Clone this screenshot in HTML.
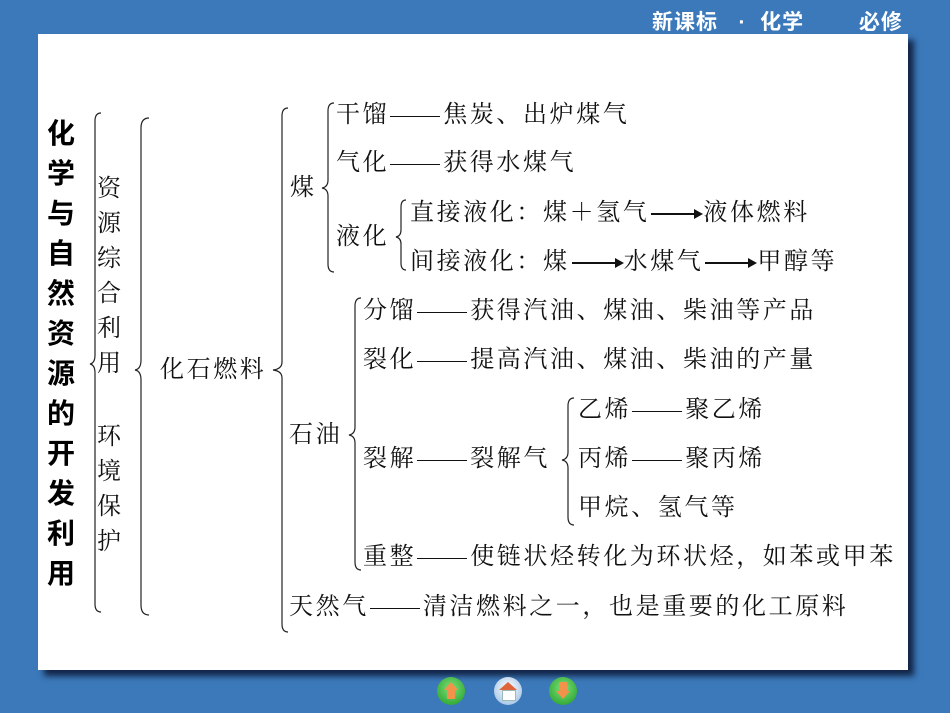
<!DOCTYPE html>
<html><head><meta charset="utf-8"><style>
body{margin:0;width:950px;height:713px;background:#3b79bb;position:relative;overflow:hidden;font-family:"Liberation Serif","Noto Serif CJK SC","Noto Sans CJK SC",serif}
.panel{position:absolute;left:38px;top:34px;width:870px;height:636px;background:#fff;box-shadow:6px 6px 6px rgba(0,0,20,.7)}
.t{position:absolute;font-size:24px;line-height:28px;color:#111;white-space:nowrap;letter-spacing:2.6px}
.hdr{position:absolute;top:6px;left:652px;color:#fff;font:bold 21px "Liberation Sans","Noto Sans CJK SC",sans-serif;white-space:nowrap;letter-spacing:1px}
.bold{position:absolute;left:44px;top:114px;width:34px;font:bold 28px/40px "Liberation Sans","Noto Sans CJK SC",sans-serif;color:#000;text-align:center}
.v{position:absolute;width:28px;font-size:24px;line-height:35px;text-align:center;color:#111}
.d{display:inline-block;width:50px;height:1.5px;background:#111;vertical-align:middle;margin:0 3px 0 1px}
.arr{display:inline-block;width:50px;height:2px;background:#111;vertical-align:middle;position:relative;margin:0 2px}
.arr:after{content:"";position:absolute;right:-2px;top:-4px;border-left:9px solid #111;border-top:5px solid transparent;border-bottom:5px solid transparent}
.btn{position:absolute;top:677px;width:28px;height:28px;border-radius:50%}
</style></head><body>
<div class="hdr">新课标&nbsp;&nbsp;&nbsp;·&nbsp;&nbsp;化学&nbsp;&nbsp;&nbsp;&nbsp;&nbsp;&nbsp;&nbsp;&nbsp;必修</div>
<div class="panel"></div>
<svg style="position:absolute;left:0;top:0" width="950" height="713" fill="none" stroke="#222" stroke-width="1.2">
<path d="M101 113 q-6 0 -6 8 V355 q0 8 -5 9 q5 1 5 9 V604 q0 8 6 8"/>
<path d="M149 118 q-8 0 -8 10 V360 q0 9 -6 10 q6 1 6 10 V605 q0 10 8 10"/>
<path d="M288 108 q-6 0 -6 8 V362 q0 7 -9 8 q9 1 9 8 V624 q0 8 6 8"/>
<path d="M334 103 q-6 0 -6 8 V180 q0 7 -6 8 q6 1 6 8 V264 q0 8 6 8"/>
<path d="M406 200 q-5 0 -5 7 V230 q0 6 -5 7 q5 1 5 7 V263 q0 7 5 7"/>
<path d="M361 298 q-6 0 -6 8 V427 q0 7 -6 8 q6 1 6 8 V562 q0 8 6 8"/>
<path d="M574 398 q-6 0 -6 8 V452 q0 7 -6 8 q6 1 6 8 V517 q0 8 6 8"/>
</svg>
<div class="bold">化<br>学<br>与<br>自<br>然<br>资<br>源<br>的<br>开<br>发<br>利<br>用</div>
<div class="v" style="left:95px;top:172px">资<br>源<br>综<br>合<br>利<br>用</div>
<div class="v" style="left:95px;top:420px">环<br>境<br>保<br>护</div>
<div class="t" style="left:160px;top:356px">化石燃料</div>
<div class="t" style="left:290px;top:174px">煤</div>
<div class="t" style="left:336px;top:101px">干馏<span class="d"></span>焦炭、出炉煤气</div>
<div class="t" style="left:336px;top:149px">气化<span class="d"></span>获得水煤气</div>
<div class="t" style="left:336px;top:223px">液化</div>
<div class="t" style="left:410px;top:199px">直接液化：煤＋氢气<span class="arr"></span>液体燃料</div>
<div class="t" style="left:410px;top:248px">间接液化：煤<span class="arr"></span>水煤气<span class="arr"></span>甲醇等</div>
<div class="t" style="left:289px;top:421px">石油</div>
<div class="t" style="left:363px;top:297px">分馏<span class="d"></span>获得汽油、煤油、柴油等产品</div>
<div class="t" style="left:363px;top:346px">裂化<span class="d"></span>提高汽油、煤油、柴油的产量</div>
<div class="t" style="left:363px;top:445px">裂解<span class="d"></span>裂解气</div>
<div class="t" style="left:578px;top:396px">乙烯<span class="d"></span>聚乙烯</div>
<div class="t" style="left:578px;top:445px">丙烯<span class="d"></span>聚丙烯</div>
<div class="t" style="left:578px;top:494px">甲烷、氢气等</div>
<div class="t" style="left:363px;top:543px">重整<span class="d"></span>使链状烃转化为环状烃，如苯或甲苯</div>
<div class="t" style="left:289px;top:593px">天然气<span class="d"></span>清洁燃料之一，也是重要的化工原料</div>
<div class="btn" style="left:437px;background:radial-gradient(circle at 50% 40%,#7fe07a,#1c9a22)"><div style="position:absolute;left:7px;top:5px;border-left:7px solid transparent;border-right:7px solid transparent;border-bottom:8px solid #f3924a"></div><div style="position:absolute;left:10px;top:13px;width:8px;height:9px;background:#f3924a"></div></div>
<div class="btn" style="left:494px;background:radial-gradient(circle at 50% 40%,#fff,#8fb7e0)"><div style="position:absolute;left:5px;top:5px;border-left:9px solid transparent;border-right:9px solid transparent;border-bottom:8px solid #e0643a"></div><div style="position:absolute;left:8px;top:13px;width:12px;height:9px;background:#fff;border:1px solid #9bb"></div></div>
<div class="btn" style="left:549px;background:radial-gradient(circle at 50% 40%,#7fe07a,#1c9a22)"><div style="position:absolute;left:10px;top:5px;width:8px;height:9px;background:#f3924a"></div><div style="position:absolute;left:7px;top:14px;border-left:7px solid transparent;border-right:7px solid transparent;border-top:8px solid #f3924a"></div></div>
</body></html>
